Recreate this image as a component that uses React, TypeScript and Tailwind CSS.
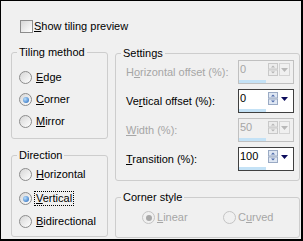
import React from 'react';

const Label: React.FC<{ text: string; u: number; disabled?: boolean; className?: string }> = ({ text, u, disabled, className }) => (
  <span className={`whitespace-nowrap ${disabled ? 'text-[#a6a6a6]' : 'text-black'} ${className ?? ''}`}>
    {text.slice(0, u)}
    <span className="underline underline-offset-[1px]">{text.charAt(u)}</span>
    {text.slice(u + 1)}
  </span>
);

const Radio: React.FC<{ checked?: boolean; disabled?: boolean }> = ({ checked, disabled }) => (
  <span
    className={`flex h-[13px] w-[13px] shrink-0 items-center justify-center rounded-full border ${
      disabled ? 'border-[#c4c4c4] bg-[#f0f0f0]' : 'border-[#8c8c8c] bg-[linear-gradient(135deg,#d6d6d6,#ffffff)]'
    }`}
  >
    {checked && (
      <span
        className={`h-[6px] w-[6px] rounded-full ${
          disabled ? 'bg-[#a8a8a8]' : 'bg-[radial-gradient(circle_at_35%_35%,#b8e0ff,#1f62b8)]'
        }`}
      />
    )}
  </span>
);

const RadioRow: React.FC<{ text: string; u: number; checked?: boolean; focus?: boolean; className?: string }> = ({ text, u, checked, focus, className }) => (
  <div className={`flex h-[13px] items-center ${className ?? ''}`}>
    <Radio checked={checked} />
    <span className={`ml-[3px] px-[1px] ${focus ? 'outline outline-1 outline-dotted outline-black' : ''}`}>
      <Label text={text} u={u} />
    </span>
  </div>
);

const Spinner: React.FC<{ disabled?: boolean }> = ({ disabled }) => {
  const edge = disabled ? '#c8c8c8' : '#9aaac4';
  const fill = disabled ? '#ececec' : '#dfe7f3';
  const arrow = disabled ? '#b4b4b4' : '#4a67a8';
  return (
    <svg width="10" height="13" viewBox="0 0 10 13" className="shrink-0">
      <rect x="0.5" y="0.5" width="9" height="5.5" fill={fill} stroke={edge} />
      <rect x="0.5" y="7" width="9" height="5.5" fill={fill} stroke={edge} />
      <path d="M3 4.5h4L5 2.5z" fill={arrow} />
      <path d="M3 8.5h4L5 10.5z" fill={arrow} />
    </svg>
  );
};

const SpinBox: React.FC<{ value: string; disabled?: boolean }> = ({ value, disabled }) => (
  <div
    className={`flex h-[24px] w-[56px] flex-col border ${
      disabled ? 'border-[#c0c0c0] bg-[#f0f0f0]' : 'border-[#404040] bg-white'
    }`}
  >
    <div className="flex h-[19px] items-start">
      <span className={`w-[29px] pl-[1px] pt-[2px] ${disabled ? 'text-[#a6a6a6]' : 'text-black'}`}>{value}</span>
      <div className="pt-[2px]">
        <Spinner disabled={disabled} />
      </div>
      {disabled ? (
        <div className="ml-[1px] mt-[2px] flex h-[13px] w-[11px] items-center justify-center border border-[#d4d4d4]">
          <svg width="7" height="4" viewBox="0 0 7 4">
            <path d="M0 0h7L3.5 4z" fill="#b8b8b8" />
          </svg>
        </div>
      ) : (
        <div className="ml-[1px] mt-[2px] flex h-[13px] w-[11px] items-center justify-center">
          <svg width="7" height="4" viewBox="0 0 7 4">
            <path d="M0 0h7L3.5 4z" fill="#0c0c5c" />
          </svg>
        </div>
      )}
    </div>
    <div className="h-[3px] w-[27px] bg-[#c4e2f6]" />
  </div>
);

const SettingRow: React.FC<{ text: string; u: number; value: string; disabled?: boolean; className?: string }> = ({ text, u, value, disabled, className }) => (
  <div className={`flex h-[24px] items-center ${className ?? ''}`}>
    <Label text={text} u={u} disabled={disabled} className="w-[112px]" />
    <SpinBox value={value} disabled={disabled} />
  </div>
);

// group box: legend stays at the border, content gets its own padding
const Group: React.FC<{ title: string; className: string; inner: string; children: React.ReactNode }> = ({ title, className, inner, children }) => (
  <fieldset className={`rounded-[3px] border border-[#cdcdcd] ${className}`}>
    <legend className="ml-[5px] px-[2px] leading-[13px]">{title}</legend>
    <div className={inner}>{children}</div>
  </fieldset>
);

export default function App() {
  return (
    <div className="box-border h-[241px] w-[303px] overflow-hidden border-b-2 border-l border-r-2 border-t border-black bg-[#f0f0f0] font-['Liberation_Sans',Arial,sans-serif] text-[11px] leading-[13px] text-black">
      <div className="ml-[19px] mt-[19px] flex h-[13px] items-center">
        <span className="h-[13px] w-[13px] border border-[#8c8c8c] bg-[linear-gradient(135deg,#d6d6d6,#ffffff)]" />
        <Label text="Show tiling preview" u={0} className="ml-[1px]" />
      </div>

      <div className="ml-[10px] mt-[13px] flex gap-[7px]">
        <div className="flex w-[97px] flex-col">
          <Group title="Tiling method" className="h-[93px]" inner="pl-[7px]">
            <RadioRow text="Edge" u={0} className="mt-[12px]" />
            <RadioRow text="Corner" u={0} checked className="mt-[9px]" />
            <RadioRow text="Mirror" u={0} className="mt-[9px]" />
          </Group>
          <Group title="Direction" className="mt-[10px] h-[88px]" inner="pl-[7px]">
            <RadioRow text="Horizontal" u={0} className="mt-[6px]" />
            <RadioRow text="Vertical" u={0} checked focus className="mt-[11px]" />
            <RadioRow text="Bidirectional" u={0} className="mt-[10px]" />
          </Group>
        </div>

        <div className="mt-[1px] flex w-[185px] flex-col">
          <Group title="Settings" className="h-[134px]" inner="pl-[10px]">
            <SettingRow text="Horizontal offset (%):" u={1} value="0" disabled />
            <SettingRow text="Vertical offset (%):" u={2} value="0" className="mt-[5px]" />
            <SettingRow text="Width (%):" u={0} value="50" disabled className="mt-[5px]" />
            <SettingRow text="Transition (%):" u={0} value="100" className="mt-[5px]" />
          </Group>
          <Group title="Corner style" className="mt-[10px] h-[47px]" inner="pl-[26px]">
            <div className="mt-[7px] flex h-[13px] items-center">
              <Radio checked disabled />
              <Label text="Linear" u={0} disabled className="ml-[2px] w-[66px]" />
              <Radio disabled />
              <Label text="Curved" u={1} disabled className="ml-[2px]" />
            </div>
          </Group>
        </div>
      </div>
    </div>
  );
}
